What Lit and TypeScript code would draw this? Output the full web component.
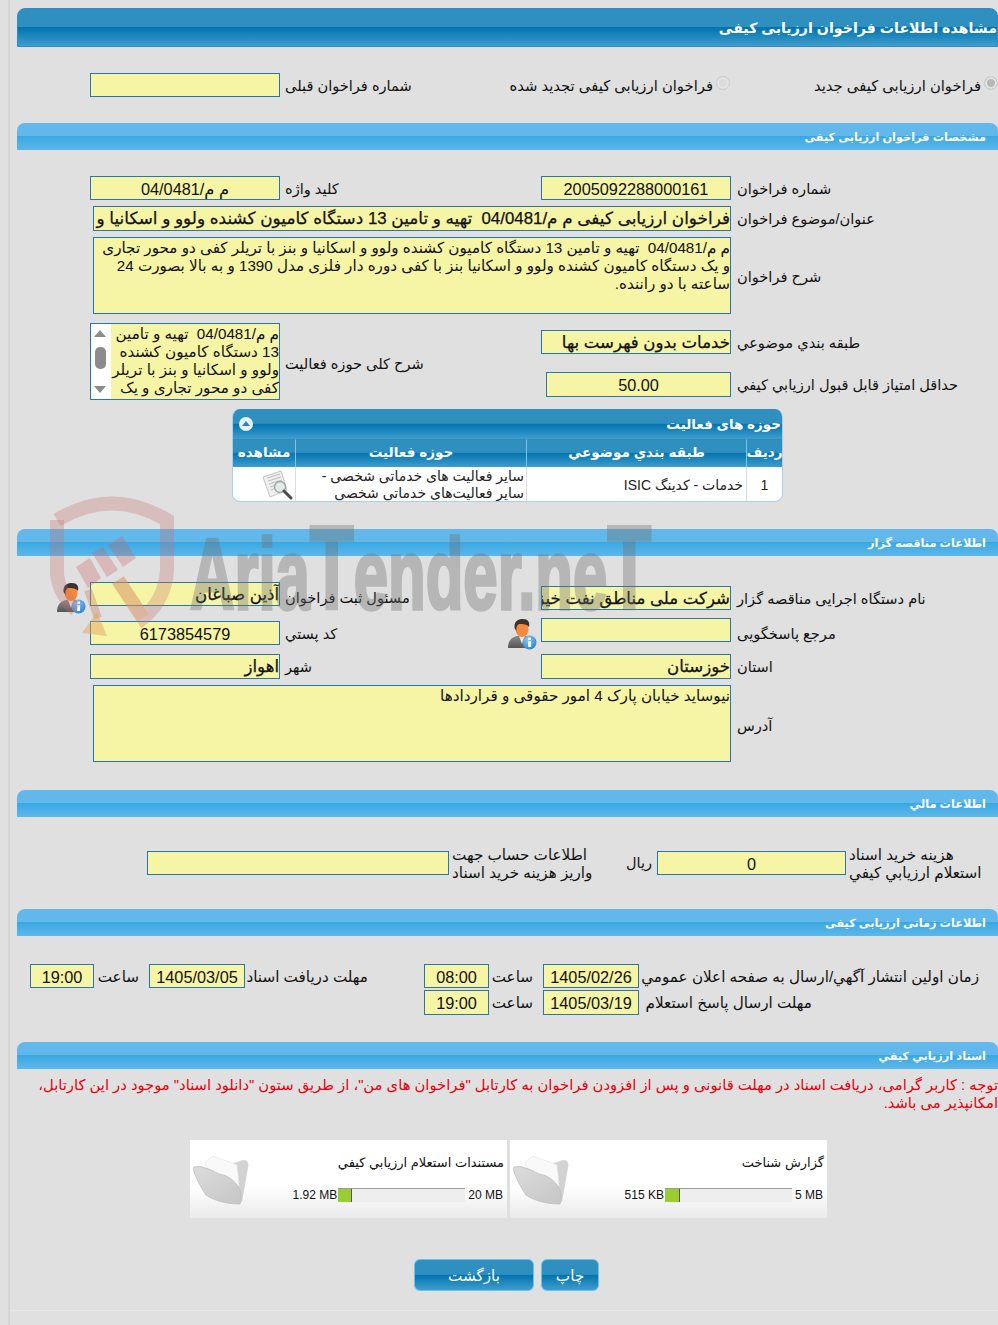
import { LitElement, html, css, svg } from "lit";
import { customElement } from "lit/decorators.js";

const person = html`<svg class="person" viewBox="0 0 30 32" aria-hidden="true">
  <defs>
    <linearGradient id="sg" x1="0" y1="0" x2="0" y2="1"><stop offset="0" stop-color="#8b8b8b"/><stop offset="1" stop-color="#555"/></linearGradient>
    <radialGradient id="ig" cx=".4" cy=".3" r=".8"><stop offset="0" stop-color="#8cc8f5"/><stop offset="1" stop-color="#1f7fd0"/></radialGradient>
  </defs>
  <path d="M1 30 C1 22 5 19 10 18 L20 18 C24 19 25 23 25 30 Z" fill="url(#sg)"/>
  <path d="M12 18 L15 26 L18 18 Z" fill="#e9e9e9"/>
  <ellipse cx="15" cy="11" rx="6.5" ry="8" fill="#f58a3c"/>
  <path d="M7.5 10 C7 3 11 1 16 1 C21 1 23 4 22 9 C20 6 16 6 12 6 C10 7 9 9 9.5 13 Z" fill="#3a3230"/>
  <circle cx="22.5" cy="24.5" r="7" fill="url(#ig)"/>
  <rect x="21.2" y="23" width="2.8" height="6" fill="#fff"/>
  <rect x="21.2" y="19.6" width="2.8" height="2.4" fill="#fff"/>
</svg>`;

const folder = html`<svg class="folder" viewBox="0 0 56 52" aria-hidden="true">
  <defs>
    <linearGradient id="fg" x1="0" y1="0" x2="1" y2="1"><stop offset="0" stop-color="#dcdcdc"/><stop offset="1" stop-color="#c6c6c6"/></linearGradient>
  </defs>
  <path d="M33 8 C38 11 44 8 50 6 C55 6 56 9 55 14 L49 48 L30 30 Z" fill="#d2d2d2"/>
  <path d="M12 8 L20 2 L44 11 L47 40 L20 30 Z" fill="#f9f9f9" stroke="#e4e4e4" stroke-width=".6"/>
  <path d="M0 14 C2 12 8 12 12 14 C20 16 24 20 30 21 C36 22 42 28 46 33 C48 38 49 46 47 50 C34 50 22 47 13 41 C7 32 2 22 0 14 Z" fill="url(#fg)" stroke="#bcbcbc" stroke-width=".8"/>
</svg>`;

const docIcon = html`<svg class="doc" viewBox="0 0 32 30" aria-hidden="true">
  <path d="M1 7 L19 1 L25 20 L8 27 Z" fill="#efefef" stroke="#c4c4c4"/>
  <path d="M5 8 L18 4 M6 11 L19 7 M7 14 L20 10 M8 17 L15 15 M9 20 L14 18" stroke="#bdbdbd" stroke-width="1"/>
  <circle cx="18" cy="17" r="5.5" fill="#dfe8e8" fill-opacity=".8" stroke="#a5a5a5" stroke-width="1.4"/>
  <path d="M22 21 L29 28" stroke="#4c4c4c" stroke-width="3" stroke-linecap="round"/>
</svg>`;

const shield = svg`
  <path d="M57 520 Q112 487 167 520 L167 570 Q165 600 143 618 L118 580" fill="none" stroke="rgba(200,110,110,.3)" stroke-width="14"/>
  <path d="M57 520 L57 575 Q60 595 76 610" fill="none" stroke="rgba(200,110,110,.3)" stroke-width="14"/>
  <path d="M108 545 L122 536 L136 558 L123 567 Z M92 553 L103 547 L118 570 L107 577 Z M76 567 L90 558 L101 578 L88 588 Z" fill="rgba(200,100,100,.32)"/>
  <path d="M88 590 L98 618" stroke="rgba(205,130,100,.4)" stroke-width="8"/>
  <path d="M82 633 L107 636 L97 612 Z" fill="rgba(225,165,95,.5)"/>
  <path d="M118 580 L143 618" stroke="rgba(225,165,95,.35)" stroke-width="14"/>
`;

@customElement("app-root")
export class AppRoot extends LitElement {
  static styles = css`
    :host { display: block; width: 998px; height: 1325px; overflow: hidden; position: relative; background: #e0e0e0;
      font-family: "Liberation Sans", "DejaVu Sans", sans-serif; color: #111; }
    .frame { margin-left: 8px; width: 990px; height: 1325px; box-sizing: border-box; border-left: 2px solid #d4d4d4; padding-left: 7px; padding-top: 8px; background: #e0e0e0; }
    .main { width: 981px; direction: rtl; }
    .h1 { height: 39px; box-sizing: border-box; border: 1px solid #2b8ad6; border-radius: 8px 8px 0 0; color: #fff; font-weight: 700; font-size: 14.2px; display: flex; align-items: center; white-space: nowrap; overflow: hidden;
      background: linear-gradient(#2f8fbf 0, #2f8fbf 48%, #0274af 50%, #3f9dcd 100%); padding-top: 1px; }
    .bar { height: 27px; box-sizing: border-box; border-radius: 8px 8px 0 0; color: #fff; font-weight: 700; font-size: 11.3px; display: flex; align-items: center; padding-right: 12px; white-space: nowrap; padding-top: 2px;
      background: linear-gradient(#62b8ea 0, #62b8ea 48%, #3aa9e2 50%, #5db7eb 100%); }
    .grid { display: grid; grid-template-columns: 267px 190px 261px 190px; justify-content: start; align-items: start; }
    .lab { font-size: 14.6px; text-align: left; padding-left: 6px; height: 24px; line-height: 26px; white-space: nowrap; }
    .lab.l { padding-left: 5px; }
    .in { box-sizing: border-box; height: 24px; border: 1px solid #2a75ae; background: #f6f5a6; font-size: 16.3px; line-height: 24px; text-align: center; white-space: nowrap; overflow: hidden; }
    .in.r { text-align: right; }
    .in.strong { font-size: 16.6px; -webkit-text-stroke: .25px #111; }
    .in.strong.title { font-size: 16.85px; width: 638px; height: 25px; }
    .radios { display: grid; grid-template-columns: 268px 311px 139px 190px; justify-content: start; height: 24px; margin-top: 26px; }
    .radio { display: flex; align-items: center; gap: 3px; font-size: 14.8px; white-space: nowrap; padding-top: 1px; }
    .dot { width: 14px; height: 14px; box-sizing: border-box; border: 1px solid #cdcdcd; background: #dcdcdc; border-radius: 50%; flex: none; margin-top: -6px; box-shadow: inset 0 0 0 2px #e4e4e4; }
    .dot.on { background: #b8b8b8; }
    .mt26 { margin-top: 26px; }
    .wrow { display: flex; align-items: flex-start; }
    .wrow > .lab { width: 267px; flex: none; box-sizing: border-box; }
    .ta { width: 638px; box-sizing: border-box; height: 77px; border: 1px solid #2a75ae; background: #f6f5a6; font-size: 15.2px; line-height: 18px; padding: 1px 0 0 1px; overflow: hidden; white-space: nowrap; }
    .tarow .lab { height: 77px; line-height: 80px; }
    .addr .lab { height: 77px; line-height: 83px; }
    .classrow { margin-top: 9px; height: 77px; display: grid; grid-template-columns: 267px 190px 261px 190px; grid-template-rows: 31px 46px; justify-content: start; }
    .rlab1 { grid-column: 1; grid-row: 1; margin-top: 7px; }
    .rin1 { grid-column: 2; grid-row: 1; margin-top: 7px; }
    .rlab2 { grid-column: 1; grid-row: 2; margin-top: 18px; }
    .rin2 { grid-column: 2; grid-row: 2; margin-top: 18px; height: 25px; width: 185px; justify-self: start; }
    .ltext { grid-column: 3; grid-row: 1 / span 2; height: 77px; line-height: 82px; }
    .list { grid-column: 4; grid-row: 1 / span 2; width: 190px; height: 77px; box-sizing: border-box; border: 1px solid #2a75ae; background: #f6f5a6; display: flex; overflow: hidden; }
    .listtxt { flex: 1; font-size: 15.2px; line-height: 18px; white-space: nowrap; padding-top: 1px; text-align: right; overflow: hidden; }
    .sb { width: 20px; flex: none; background: #fff; position: relative; }
    .sb .up { position: absolute; top: 6px; left: 3px; width: 0; height: 0; border: 6px solid transparent; border-bottom: 7px solid #8c8c8c; border-top: 0; }
    .sb .dn { position: absolute; bottom: 6px; left: 3px; width: 0; height: 0; border: 6px solid transparent; border-top: 7px solid #8c8c8c; border-bottom: 0; }
    .sb .th { position: absolute; top: 23px; left: 4px; width: 11px; height: 22px; background: #8c8c8c; border-radius: 5px; }
    .tw { margin: 9px 215px 0 0; width: 551px; height: 93px; box-sizing: border-box; border-radius: 8px; background: #fff; overflow: hidden; border: 1px solid #a9cfe9; border-top: 0; }
    .tt { height: 30px; background: linear-gradient(#2f8fbf 0, #2f8fbf 48%, #0274af 50%, #3f9dcd 100%); color: #fff; font-weight: 700; font-size: 13.5px; display: flex; justify-content: space-between; align-items: center; padding: 0 1px 0 6px; white-space: nowrap; }
    .coll { width: 14px; height: 14px; border-radius: 50%; background: #e8f1f7; position: relative; flex: none; }
    .coll::after { content: ""; position: absolute; left: 3px; top: 4px; border: 4px solid transparent; border-bottom: 5px solid #2a86b8; border-top: 0; }
    .th-row, .td-row { display: grid; grid-template-columns: 36px 220px 231px 1fr; }
    .th-row { height: 28px; background: linear-gradient(#2f8fbf 0, #2f8fbf 48%, #0274af 50%, #3f9dcd 100%); color: #fff; font-weight: 700; font-size: 13.6px; }
    .th-row div { display: flex; align-items: center; justify-content: center; border-left: 1px solid #7cc3ea; border-top: 1px solid #2d8cba; white-space: nowrap; overflow: hidden; padding-bottom: 4px; }
    .th-row div:last-child { border-left: 0; }
    .td-row { height: 35px; font-size: 14px; color: #222; }
    .td-row div { border-left: 1px solid #dcdcdc; display: flex; align-items: center; overflow: hidden; }
    .td-row div:last-child { border-left: 0; justify-content: flex-start; padding-right: 1px; }
    .c { justify-content: center; }
    .td-row .act { padding-right: 3px; }
    .td-row .multi { display: block; line-height: 17px; padding: 1px 2px 0 0; white-space: nowrap; }
    .contact { display: grid; grid-template-columns: 267px 190px 261px 190px; justify-content: start; }
    .pcell { position: relative; }
    .person { position: absolute; width: 30px; height: 32px; left: -34px; top: 0; }
    .doc { width: 32px; height: 30px; }
    .folder { width: 56px; height: 52px; flex: none; filter: blur(.4px); }
    .m4 { margin-top: 4px; } .m3 { margin-top: 3px; }
    .fin { display: grid; grid-template-columns: 152px 189px 36px 172px 302px; justify-content: start; margin-top: 34px; height: 24px; }
    .two { font-size: 15.2px; line-height: 18px; white-space: nowrap; padding-left: 3px; margin-top: -5px; text-align: left; }
    .cell-center { text-align: center; font-size: 14.5px; line-height: 24px; }
    .times { display: flex; font-size: 15.2px; white-space: nowrap; height: 24px; padding-right: 19px; }
    .times > * { flex: none; }
    .tl { line-height: 26px; box-sizing: border-box; }
    .note { color: #e4000f; font-size: 14.76px; line-height: 18px; margin-top: 7px; white-space: nowrap; height: 36px; }
    .cards { display: flex; gap: 3px; margin: 28px 171px 0 0; height: 78px; }
    .card { width: 317px; height: 78px; box-sizing: border-box; background: linear-gradient(#fff 0, #fff 60%, #eaeaea 100%); display: flex; flex-direction: column; padding: 14px 3px 0 4px; position: relative; }
    .card .name { font-size: 13px; line-height: 18px; text-align: right; white-space: nowrap; }
    .sz { display: flex; align-items: center; margin-top: 16px; font-size: 12px; white-space: nowrap; height: 14px; }
    .sz span { flex: none; direction: ltr; }
    .max { padding-right: 1px; }
    .track { width: 127px; height: 14px; box-sizing: border-box; border-top: 1px solid #999; background: #eee; direction: ltr; flex: none; margin: 0 3px 0 0; }
    .fill { height: 13px; background: #9acd32; border-right: 1px solid #555; box-sizing: border-box; }
    .cur { margin-right: 1px; }
    .card .folder { position: absolute; left: 3px; top: 14px; }
    .btns { display: flex; gap: 7px; margin: 41px 399px 0 0; height: 32px; }
    .btn { box-sizing: border-box; height: 32px; border: 1px solid #66c3ee; border-radius: 6px; color: #fff; font-size: 15.2px; display: flex; align-items: center; justify-content: center; padding-top: 1px;
      background: linear-gradient(#2f8fbf 0, #2f8fbf 48%, #0274af 50%, #3f9dcd 100%); }
    .wm { position: absolute; inset: 0; pointer-events: none; }
    .wm svg { position: absolute; left: 0; top: 0; width: 998px; height: 1325px; }
    .wmt { position: absolute; left: 190px; top: 518px; font-family: "Liberation Sans", sans-serif; font-weight: 700; font-size: 101px; line-height: 100px; color: #6e6e6e; -webkit-text-stroke: 3.5px #6e6e6e; opacity: .36; transform-origin: 0 0; transform: scaleX(.61); white-space: nowrap; direction: ltr; }
    .wmt span { font-size: 118px; }
    .foot { position: absolute; left: 10px; right: 0; top: 1310px; height: 1px; background: #e8e8e8; }
  `;

  render() {
    return html`
      <div class="frame"><div class="main">
        <div class="h1">مشاهده اطلاعات فراخوان ارزیابی کیفی</div>

        <div class="radios">
          <div class="radio"><span class="dot on"></span>فراخوان ارزیابی کیفی جدید</div>
          <div class="radio"><span class="dot"></span>فراخوان ارزیابی کیفی تجدید شده</div>
          <div class="lab l">شماره فراخوان قبلی</div>
          <div class="in"></div>
        </div>

        <div class="bar mt26">مشخصات فراخوان ارزیابی کیفی</div>

        <div class="grid mt26">
          <div class="lab">شماره فراخوان</div><div class="in">2005092288000161</div>
          <div class="lab l">کلید واژه</div><div class="in">م م/04/0481</div>
        </div>
        <div class="wrow" style="margin-top:6px">
          <div class="lab">عنوان/موضوع فراخوان</div>
          <div class="in r strong title">فراخوان ارزیابی کیفی م م/04/0481 &nbsp;تهیه و تامین 13 دستگاه کامیون کشنده ولوو و اسکانیا و</div>
        </div>
        <div class="wrow tarow" style="margin-top:6px">
          <div class="lab">شرح فراخوان</div>
          <div class="ta">م م/04/0481 &nbsp;تهیه و تامین 13 دستگاه کامیون کشنده ولوو و اسکانیا و بنز با تریلر کفی دو محور تجاری<br>و یک دستگاه کامیون کشنده ولوو و اسکانیا بنز با کفی دوره دار فلزی مدل 1390 و به بالا بصورت 24<br>ساعته با دو راننده.</div>
        </div>

        <div class="classrow">
          <div class="lab rlab1">طبقه بندي موضوعي</div>
          <div class="in r strong rin1">خدمات بدون فهرست بها</div>
          <div class="lab rlab2">حداقل امتياز قابل قبول ارزيابي کيفي</div>
          <div class="in rin2">50.00</div>
          <div class="lab l ltext">شرح کلی حوزه فعالیت</div>
          <div class="list">
            <div class="listtxt">م م/04/0481 &nbsp;تهیه و تامین<br>13 دستگاه کامیون کشنده<br>ولوو و اسکانیا و بنز با تریلر<br>کفی دو محور تجاری و یک</div>
            <div class="sb"><span class="up"></span><span class="th"></span><span class="dn"></span></div>
          </div>
        </div>

        <div class="tw">
          <div class="tt"><span>حوزه های فعالیت</span><span class="coll"></span></div>
          <div class="th-row"><div>رديف</div><div>طبقه بندي موضوعي</div><div>حوزه فعالیت</div><div>مشاهده</div></div>
          <div class="td-row">
            <div class="c">1</div>
            <div class="act">خدمات - کدینگ ISIC</div>
            <div class="multi">سایر فعالیت های خدماتی شخصی -<br>سایر فعالیت‌های خدماتی شخصی</div>
            <div>${docIcon}</div>
          </div>
        </div>

        <div class="bar" style="margin-top:27px">اطلاعات مناقصه گزار</div>

        <div class="contact" style="margin-top:26px">
          <div class="lab m4">نام دستگاه اجرایی مناقصه گزار</div>
          <div class="in r strong m4">شرکت ملی مناطق نفت خیز جنوب</div>
          <div class="lab l m3">مسئول ثبت فراخوان</div>
          <div class="pcell">${person}<div class="in r strong">آذین صباغان</div></div>
        </div>
        <div class="contact" style="margin-top:8px">
          <div class="lab m3">مرجع پاسخگویی</div>
          <div class="pcell">${person}<div class="in"></div></div>
          <div class="lab l m3">کد پستي</div>
          <div class="in m3">6173854579</div>
        </div>
        <div class="contact" style="margin-top:9px">
          <div class="lab">استان</div>
          <div class="in r strong" style="height:25px">خوزستان</div>
          <div class="lab l">شهر</div>
          <div class="in r strong" style="height:25px">اهواز</div>
        </div>
        <div class="wrow addr" style="margin-top:6px">
          <div class="lab">آدرس</div>
          <div class="ta">نیوساید خیابان پارک 4 امور حقوقی و قراردادها</div>
        </div>

        <div class="bar" style="margin-top:28px">اطلاعات مالي</div>

        <div class="fin">
          <div class="two">هزینه خرید اسناد<br>استعلام ارزيابي کيفي</div>
          <div class="in">0</div>
          <div class="cell-center">ریال</div>
          <div class="two">اطلاعات حساب جهت<br>واریز هزینه خرید اسناد</div>
          <div class="in"></div>
        </div>

        <div class="bar" style="margin-top:34px">اطلاعات زمانی ارزیابی کیفی</div>

        <div class="times" style="margin-top:28px">
          <div class="tl" style="width:340px">زمان اولین انتشار آگهي/ارسال به صفحه اعلان عمومي</div>
          <div class="in" style="width:96px">1405/02/26</div>
          <div class="tl" style="width:54px;padding-right:10px">ساعت</div>
          <div class="in" style="width:65px">08:00</div>
          <div class="tl" style="width:179px;padding-right:56px">مهلت دریافت اسناد</div>
          <div class="in" style="width:96px">1405/03/05</div>
          <div class="tl" style="width:55px;padding-right:10px">ساعت</div>
          <div class="in" style="width:64px">19:00</div>
        </div>
        <div class="times" style="margin-top:2px;height:25px">
          <div class="tl" style="width:340px;padding-right:167px">مهلت ارسال پاسخ استعلام</div>
          <div class="in" style="width:96px;height:25px">1405/03/19</div>
          <div class="tl" style="width:54px;padding-right:10px">ساعت</div>
          <div class="in" style="width:65px;height:25px">19:00</div>
        </div>

        <div class="bar" style="margin-top:27px">اسناد ارزيابي کيفي</div>

        <div class="note">توجه : کاربر گرامی، دریافت اسناد در مهلت قانونی و پس از افزودن فراخوان به کارتابل "فراخوان های من"، از طریق ستون "دانلود اسناد" موجود در این کارتابل،<br>امکانپذیر می باشد.</div>

        <div class="cards">
          <div class="card">
            <div class="name">گزارش شناخت</div>
            <div class="sz"><span class="max">5 MB</span><div class="track"><div class="fill" style="width:15px"></div></div><span class="cur">515 KB</span></div>
            ${folder}
          </div>
          <div class="card">
            <div class="name">مستندات استعلام ارزيابي کيفي</div>
            <div class="sz"><span class="max">20 MB</span><div class="track"><div class="fill" style="width:14px"></div></div><span class="cur">1.92 MB</span></div>
            ${folder}
          </div>
        </div>

        <div class="btns">
          <div class="btn" style="width:58px">چاپ</div>
          <div class="btn" style="width:120px">بازگشت</div>
        </div>
      </div></div>
      <div class="foot"></div>
      <div class="wm">
        <div class="wmt">Aria<span>T</span>ender.ne<span>T</span></div>
        <svg viewBox="0 0 998 1325" aria-hidden="true">${shield}</svg>
      </div>
    `;
  }
}
